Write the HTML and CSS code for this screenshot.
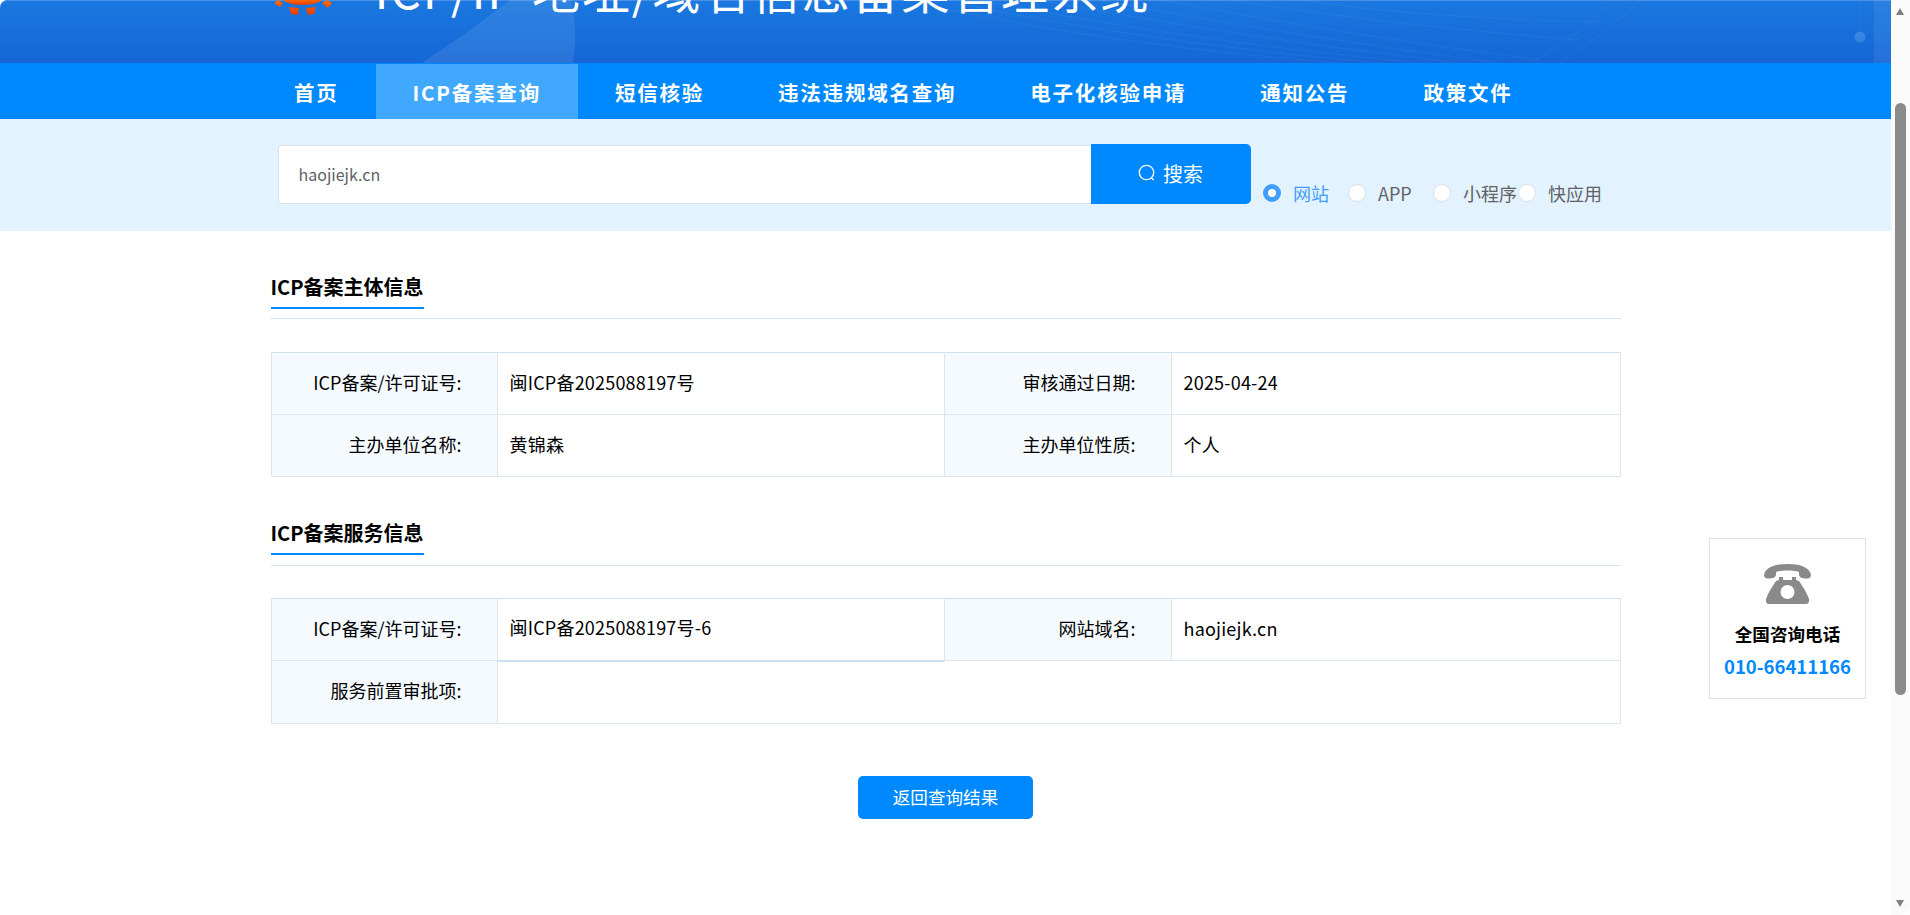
FILE: index.html
```html
<!DOCTYPE html>
<html lang="zh-CN">
<head>
<meta charset="utf-8">
<title>ICP/IP地址/域名信息备案管理系统</title>
<link rel="stylesheet" href="styles.css">
</head>
<body>
<div class="page">
  <header class="banner">
    <svg class="banner-art" viewBox="0 0 1891 63" width="1891" height="63" aria-hidden="true">
      <path d="M422 63 L470 30 L510 0 L571 0 Q578 30 573 63 Z" fill="#fff" fill-opacity=".09"/>
      <g fill="none" stroke="#fff" stroke-opacity=".05" stroke-width="1">
        <path d="M980 0 Q1180 40 1420 63"/><path d="M960 4 Q1160 44 1380 63"/><path d="M940 8 Q1120 46 1340 63"/>
        <path d="M1040 0 Q1230 36 1460 63"/><path d="M1100 0 Q1280 34 1500 63"/><path d="M1160 0 Q1340 34 1540 60"/>
        <path d="M1230 0 Q1380 24 1580 40"/><path d="M1300 0 Q1420 18 1600 22"/>
        <path d="M1560 63 Q1610 30 1640 0"/><path d="M1530 63 Q1590 30 1610 0"/>
      </g>
      <rect x="1874" y="0" width="17" height="63" fill="#fff" fill-opacity=".07"/>
      <path d="M1860 0 V37 L1874 28" fill="none" stroke="#fff" stroke-opacity=".06"/>
      <circle cx="1860" cy="37" r="5.5" fill="#fff" fill-opacity=".14"/>
    </svg>
    <div class="banner-inner">
      <svg class="logo" viewBox="0 0 60 15" width="60" height="15" aria-hidden="true">
        <defs><linearGradient id="sun" x1="0" y1="0" x2="0" y2="1"><stop offset="0" stop-color="#ff6a00"/><stop offset="1" stop-color="#e83a05"/></linearGradient></defs>
        <path d="M11 0 H50 Q44 5 30 5 Q17 5 11 0 Z" fill="url(#sun)"/>
        <path d="M2 3 L6 0 L11 3 L8 7 Z M17 7 L27 8 L26 15 L19 14 Z M34 8 L44 7 L42 14 L36 15 Z M50 3 L55 0 L60 3 L56 8 Z" fill="url(#sun)"/>
      </svg>
      <h1 class="site-title">ICP/IP 地址/域名信息备案管理系统</h1>
    </div>
  </header>

  <nav class="mainnav">
    <a class="nav-item" href="#">首页</a>
    <a class="nav-item is-active" href="#">ICP备案查询</a>
    <a class="nav-item" href="#">短信核验</a>
    <a class="nav-item" href="#">违法违规域名查询</a>
    <a class="nav-item" href="#">电子化核验申请</a>
    <a class="nav-item" href="#">通知公告</a>
    <a class="nav-item" href="#">政策文件</a>
  </nav>

  <section class="search-band">
    <div class="search-row">
      <div class="search-input">haojiejk.cn</div>
      <button class="search-btn" type="button">
        <svg viewBox="0 0 18 18" width="18" height="18" aria-hidden="true"><circle cx="8.5" cy="8.5" r="7.2" fill="none" stroke="#fff" stroke-width="1.3"/><path d="M13.2 13.6 L15.6 16" stroke="#fff" stroke-width="1.3" fill="none"/></svg>
        <span>搜索</span>
      </button>
      <div class="radio-group">
        <label class="radio is-checked"><i class="radio-dot"></i><span>网站</span></label>
        <label class="radio"><i class="radio-dot"></i><span>APP</span></label>
        <label class="radio"><i class="radio-dot"></i><span>小程序</span></label>
        <label class="radio"><i class="radio-dot"></i><span>快应用</span></label>
      </div>
    </div>
  </section>

  <main class="content">
    <div class="section-head"><h2 class="section-title">ICP备案主体信息</h2></div>
    <table class="info-table">
      <colgroup><col class="c-label"><col class="c-value"><col class="c-label2"><col></colgroup>
      <tr><th>ICP备案/许可证号:</th><td>闽ICP备2025088197号</td><th>审核通过日期:</th><td>2025-04-24</td></tr>
      <tr><th>主办单位名称:</th><td>黄锦森</td><th>主办单位性质:</th><td>个人</td></tr>
    </table>

    <div class="section-head second"><h2 class="section-title">ICP备案服务信息</h2></div>
    <table class="info-table tight">
      <colgroup><col class="c-label"><col class="c-value"><col class="c-label2"><col></colgroup>
      <tr><th>ICP备案/许可证号:</th><td class="underlined">闽ICP备2025088197号-6</td><th>网站域名:</th><td>haojiejk.cn</td></tr>
      <tr class="tall"><th>服务前置审批项:</th><td colspan="3"></td></tr>
    </table>

    <div class="actions"><button class="back-btn" type="button">返回查询结果</button></div>
  </main>
</div>

<aside class="hotline">
  <svg viewBox="0 0 47 40" width="47" height="40" aria-hidden="true">
    <path d="M0 11 C1 3 12 0 23.5 0 C35 0 46 3 47 11 C47 14 44 15 41 14.5 C37 14 35 13 35 10 L35 8 C30 6 17 6 12 8 L12 10 C12 13 10 14 6 14.5 C3 15 0 14 0 11 Z" fill="#8a8a8a"/>
    <path d="M15 13 H19 V16 H28 V13 H32 V16 L35 17 C39 23 43 29 45 35 C45.500 38 44 40 42 40 H5 C3 40 1.500 38 2 35 C4 29 8 23 12 17 L15 16 Z" fill="#8a8a8a"/>
    <circle cx="23.500" cy="28" r="7" fill="#fff"/>
  </svg>
  <strong class="hotline-label">全国咨询电话</strong>
  <strong class="hotline-phone">010-66411166</strong>
</aside>

<div class="scrollbar">
  <i class="arrow-up"></i>
  <i class="thumb"></i>
  <i class="arrow-down"></i>
</div>
</body>
</html>
```
FILE: styles.css
```css
* { box-sizing: border-box; }
html, body { margin: 0; height: 100%; overflow: hidden; background: #fff; }
body { font-family: "Noto Sans CJK SC", "Noto Sans", sans-serif; color: #000; }
.page { width: 1891px; }

.banner { position: relative; height: 63px; overflow: hidden; border-top-left-radius: 8px;
  background: linear-gradient(180deg, #1a78e0 0%, #1566d6 100%); box-shadow: inset 0 1px 0 #4a8fe4; }
.banner-art { position: absolute; left: 0; top: 0; }
.banner-inner { position: relative; width: 1350px; margin: 0 auto; display: flex; align-items: flex-start; }
.logo { flex: none; margin-left: 1px; }
.site-title { margin: -47px 0 0 43px; font-size: 48px; line-height: 70px; font-weight: 400; letter-spacing: 1.8px; color: #fff; white-space: nowrap; }

.mainnav { height: 56px; background: #0089ff; display: flex; padding-left: 257px; }
.nav-item { display: flex; align-items: center; padding: 0 37px; margin-top: 1px; color: #fff; font-size: 20.5px; font-weight: 700; letter-spacing: 1.78px; text-decoration: none; white-space: nowrap; }
.nav-item.is-active { background: #40a9ff; }

.search-band { height: 112px; background: #e3f2ff; padding-top: 25px; }
.search-row { width: 1350px; margin: 0 auto; padding-left: 7px; display: flex; align-items: flex-end; }
.search-input { width: 813px; height: 59px; display: flex; align-items: center; padding: 0 0 2px 20px; background: #fff; border: 1px solid #dcdfe6; border-right: 0; border-radius: 4px 0 0 4px; color: #606266; font-size: 16px; }
.search-btn { width: 160px; height: 60px; padding: 0 0 2px; border: 0; border-radius: 0 5px 5px 0; background: #0089ff; color: #fff; display: flex; align-items: center; justify-content: center; gap: 7px; font: inherit; font-size: 20px; }
.radio-group { display: grid; grid-template-columns: repeat(4, 85px); margin: 0 0 1px 12px; }
.radio { display: flex; align-items: center; gap: 12.5px; height: 20px; font-size: 18px; color: #606266; white-space: nowrap; }
.radio-dot { flex: none; width: 18px; height: 18px; border-radius: 50%; background: #fff; border: 1px solid #dcdfe6; }
.radio.is-checked { color: #409eff; }
.radio.is-checked .radio-dot { border: 5.5px solid #409eff; }

.content { width: 1350px; margin: 0 auto; padding-top: 39px; }
.section-head { height: 49px; border-bottom: 1px solid #cfe3f7; }
.section-head.second { height: 50px; margin-top: 39px; border-color: #d5e2ee; }
.section-title { display: inline-block; margin: 0; height: 39px; border-bottom: 2px solid #0089ff; font-size: 20px; line-height: 34px; font-weight: 700; color: #000; white-space: nowrap; }
.info-table { width: 1350px; margin-top: 33px; table-layout: fixed; border-collapse: collapse; border: 1px solid #dcdfe6; font-size: 18px; }
.info-table.tight { margin-top: 32px; }
.c-label { width: 226px; }
.c-value { width: 447px; }
.c-label2 { width: 227px; }
.info-table tr { height: 62px; }
.info-table tr.tall { height: 63px; }
.info-table th { background: #f5faff; border: 1px solid #dce6ef; border-top-color: #cfe0f0; text-align: right; padding: 0 35px 4px 0; font-weight: 400; }
.info-table td { border: 1px solid #dce6ef; border-top-color: #cfe0f0; padding: 0 0 4px 12px; letter-spacing: .2px; }
.info-table td.underlined { border-bottom: 2px solid #cfe0f0; }
.actions { display: flex; justify-content: center; margin-top: 52px; }
.back-btn { width: 175px; height: 43px; padding: 0 0 2px; border: 0; border-radius: 5px; background: #0089ff; color: #fff; font: inherit; font-size: 17.6px; }

.hotline { position: fixed; left: 1709px; top: 538px; width: 157px; height: 161px; border: 1px solid #e0e0ea; background: #fff; display: flex; flex-direction: column; align-items: center; padding-top: 25px; }
.hotline-label { margin-top: 17px; font-size: 17.6px; line-height: 26px; }
.hotline-phone { margin-top: 6px; font-size: 18.5px; line-height: 26px; color: #0089ff; }

.scrollbar { position: fixed; left: 1891px; top: 0; bottom: 0; width: 19px; background: #fafafa; border-bottom-right-radius: 10px; }
.thumb { position: absolute; left: 4px; top: 103px; width: 11px; height: 592px; background: #8a8a8a; border-radius: 6px; }
.arrow-up, .arrow-down { position: absolute; left: 5px; width: 0; height: 0; border-left: 4.5px solid transparent; border-right: 4.5px solid transparent; }
.arrow-up { top: 8px; border-bottom: 7px solid #808080; }
.arrow-down { top: 900px; border-top: 7px solid #808080; }
```
